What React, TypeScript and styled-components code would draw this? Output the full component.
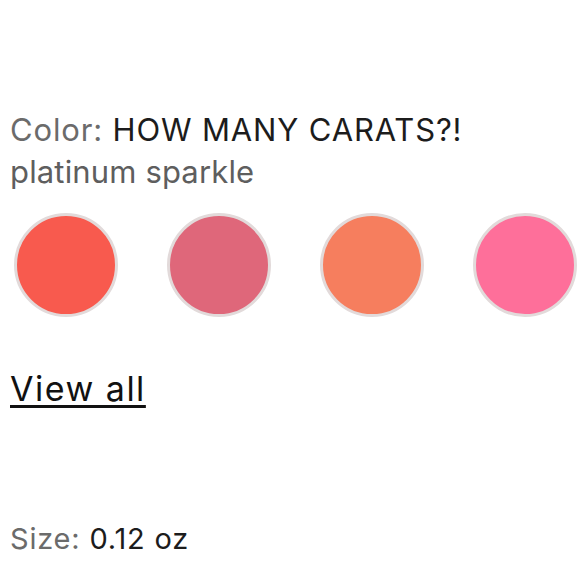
import React, { FC } from "react";
import styled, { createGlobalStyle } from "styled-components";

const GlobalStyle = createGlobalStyle`
  html, body {
    margin: 0;
    padding: 0;
    background: #ffffff;
  }
  body {
    font-family: "Inter", "Liberation Sans", sans-serif;
    color: #1f1f1f;
  }
`;

const Page = styled.div`
  width: 580px;
  height: 580px;
  overflow: hidden;
  padding: 109px 0 0 10px;
  box-sizing: border-box;
`;

const Label = styled.div`
  font-size: 31px;
  line-height: 42px;
  color: #6b6b6b;
  letter-spacing: 0.85px;
  white-space: nowrap;
`;

const Value = styled.span`
  color: #1c1c1c;
`;

const SubName = styled.div`
  font-size: 31px;
  line-height: 42px;
  color: #5e5e5e;
  letter-spacing: 0.15px;
`;

const SwatchRow = styled.div`
  display: flex;
  gap: 49px;
  padding: 20px 0 0 4px;
`;

type SwatchProps = {
  $color: string;
};

const Swatch = styled.button<SwatchProps>`
  width: 104px;
  height: 104px;
  border-radius: 50%;
  border: 3px solid #e2dada;
  background: ${(props) => props.$color};
  padding: 0;
  flex-shrink: 0;
  box-sizing: border-box;
`;

const ViewAll = styled.a`
  display: block;
  width: fit-content;
  margin-top: 52px;
  font-size: 34px;
  line-height: 40px;
  letter-spacing: 1.5px;
  color: #111;
  text-decoration: underline;
  text-decoration-thickness: 3px;
  text-underline-offset: 4px;
`;

const SizeLine = styled(Label)`
  margin-top: 110px;
  font-size: 29px;
  line-height: 40px;
  letter-spacing: 0.8px;
`;

const swatches = ["#f85a4e", "#df677a", "#f67e5e", "#fe6f9a"];

const App: FC = () => {
  return (
    <Page>
      <GlobalStyle />
      <Label>
        Color: <Value>HOW MANY CARATS?!</Value>
      </Label>
      <SubName>platinum sparkle</SubName>
      <SwatchRow>
        {swatches.map((c) => (
          <Swatch key={c} $color={c} type="button" />
        ))}
      </SwatchRow>
      <ViewAll href="#">View all</ViewAll>
      <SizeLine>
        Size: <Value>0.12 oz</Value>
      </SizeLine>
    </Page>
  );
};

export default App;
